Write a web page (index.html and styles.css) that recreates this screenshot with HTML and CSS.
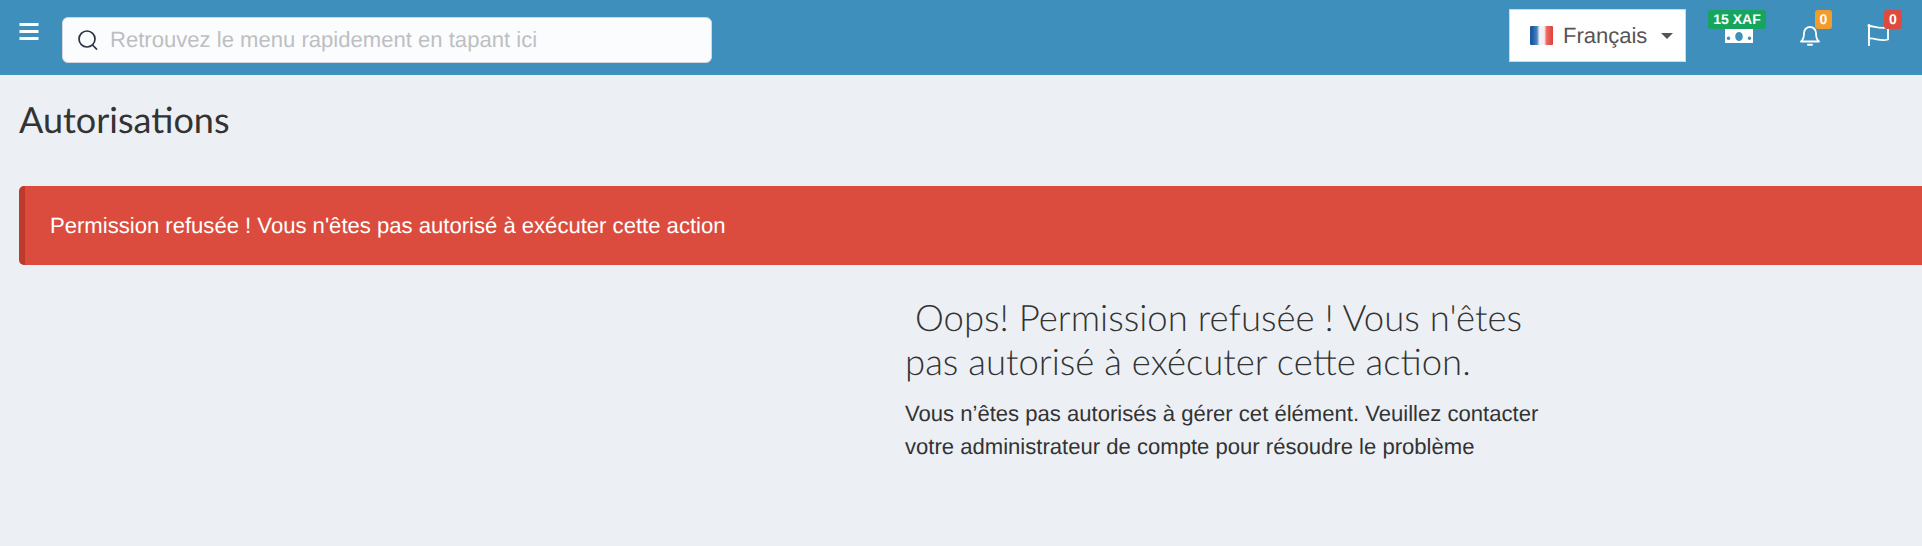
FILE: index.html
```html
<!DOCTYPE html>
<html lang="fr">
<head>
  <meta charset="UTF-8" />
  <title>Autorisations</title>
  <link rel="stylesheet" href="styles.css">
</head>
<body>

<div class="header">
  <button class="menu-toggle">
    <svg width="20" height="18" viewBox="0 0 20 18"><path d="M0.500 0h19v3h-19zM0.500 7h19v3h-19zM0.500 14h19v3h-19z" fill="#fff"/></svg>
  </button>
  <div class="search">
    <svg width="22" height="20" viewBox="0 0 22 20" fill="none" stroke="#2b3442" stroke-width="1.700"><circle cx="10" cy="9" r="8"/><path d="M15.500 15l4.500 4.500"/></svg>
    <span class="search-text">Retrouvez le menu rapidement en tapant ici</span>
  </div>
  <div class="header-right">
    <div class="lang">
      <svg class="flag" width="23" height="19" viewBox="0 0 23 19">
        <defs>
          <linearGradient id="fr">
            <stop offset="0.100" stop-color="#1d5aa5"/>
            <stop offset="0.300" stop-color="#4d80bd"/>
            <stop offset="0.420" stop-color="#f2f4f7"/>
            <stop offset="0.620" stop-color="#f6eeee"/>
            <stop offset="0.720" stop-color="#ee6a63"/>
            <stop offset="1" stop-color="#dd3f3a"/>
          </linearGradient>
        </defs>
        <rect width="23" height="19" rx="1" fill="url(#fr)"/>
      </svg>
      <span>Français</span>
      <span class="caret"></span>
    </div>
    <div class="nav-icon nav-money">
      <svg width="28" height="15" viewBox="0 0 28 15"><path fill-rule="evenodd" d="M0 0h28v15H0zM14 4a3.800 4.500 0 1 0 0 9 3.800 4.500 0 0 0 0-9zM3.500 8.500a1.800 1.800 0 1 0 0 3.600 1.800 1.800 0 0 0 0-3.600zM24.500 8.500a1.800 1.800 0 1 0 0 3.600 1.800 1.800 0 0 0 0-3.600z" fill="#fff"/></svg>
      <span class="badge badge-green">15 XAF</span>
    </div>
    <div class="nav-icon nav-bell">
      <svg width="20" height="22" viewBox="0 0 20 22" fill="none" stroke="#fff" stroke-width="1.800"><path d="M1 17.500c2-1.500 3-4 3-8.500a6 6 0 0 1 12 0c0 4.500 1 7 3 8.500z" stroke-linejoin="round"/><path d="M8 20.800h4" stroke-width="2" stroke-linecap="round"/></svg>
      <span class="badge badge-orange">0</span>
    </div>
    <div class="nav-icon nav-flag">
      <svg width="22" height="22" viewBox="0 0 22 22" fill="none" stroke="#fff" stroke-width="1.800"><path d="M2 1.500v20" stroke-linecap="round"/><circle cx="2" cy="1.500" r="1.500" fill="#fff" stroke="none"/><path d="M2 2c6 0 8 3 19 1.500v12c-8 2-12-1.500-19-1z" stroke-linejoin="round"/></svg>
      <span class="badge badge-red">0</span>
    </div>
  </div>
</div>

<div class="content">
  <h1 class="page-title">Autorisations</h1>
  <div class="alert">Permission refusée ! Vous n'êtes pas autorisé à exécuter cette action</div>
  <div class="error-page">
    <h3>&nbsp;Oops! Permission refusée ! Vous n'êtes pas autorisé à exécuter cette action.</h3>
    <p>Vous n’êtes pas autorisés à gérer cet élément. Veuillez contacter votre administrateur de compte pour résoudre le problème</p>
  </div>
</div>

</body>
</html>
```

FILE: styles.css
```css
html, body {
  margin: 0;
  padding: 0;
  background-color: #ecf0f5;
  font-family: 'Liberation Sans', Arial, sans-serif;
  color: #333;
  overflow: hidden;
  text-rendering: geometricPrecision;
}

.header {
  height: 75px;
  background-color: #3f8fbc;
  display: flex;
  align-items: flex-start;
}

.menu-toggle {
  background: none;
  border: none;
  padding: 0;
  margin: 22px 0 0 19px;
  width: 20px;
  height: 20px;
  line-height: 0;
}

.search {
  width: 650px;
  height: 46px;
  margin: 17px 0 0 23px;
  box-sizing: border-box;
  background-color: #fbfcfe;
  border: 1px solid #d2d6de;
  border-radius: 6px;
  display: flex;
  align-items: center;
  padding-left: 14px;
  gap: 11px;
}

.search-text {
  font-size: 22.080px;
  color: #bdbfc2;
}

.header-right {
  margin-left: auto;
  display: flex;
  align-items: flex-start;
}

.lang {
  width: 177px;
  height: 53px;
  margin-top: 9px;
  box-sizing: border-box;
  background-color: #fff;
  border: 1px solid #d2d6de;
  display: flex;
  align-items: center;
  padding-left: 20px;
  font-size: 22px;
  color: #555;
}

.flag {
  margin-right: 10px;
}

.caret {
  width: 0;
  height: 0;
  margin-left: 14px;
  border-left: 6px solid transparent;
  border-right: 6px solid transparent;
  border-top: 6px solid #555;
}

.nav-icon {
  position: relative;
  height: 75px;
  box-sizing: border-box;
  display: flex;
  align-items: flex-start;
}

.nav-money {
  width: 28px;
  margin-left: 39px;
  padding-top: 28px;
}

.nav-bell {
  width: 20px;
  margin-left: 47px;
  padding-top: 24px;
}

.nav-flag {
  width: 22px;
  margin-left: 47px;
  margin-right: 33px;
  padding-top: 24px;
}

.badge {
  position: absolute;
  top: 10px;
  height: 19px;
  border-radius: 3px;
  color: #fff;
  font-size: 14px;
  font-weight: bold;
  line-height: 19px;
  text-align: center;
}

.badge-green {
  left: -17px;
  width: 58px;
  background-color: #16a55e;
}

.badge-orange {
  left: 15px;
  width: 17px;
  background-color: #f39c2c;
}

.badge-red {
  left: 17px;
  width: 18px;
  background-color: #dd4b3e;
}

.content {
  padding: 0 0 0 19px;
}

.page-title {
  margin: 0;
  padding-top: 22px;
  font-family: 'Lato', sans-serif;
  font-size: 36px;
  font-weight: 400;
  line-height: 44px;
  color: #333;
}

.alert {
  margin-top: 45px;
  height: 79px;
  box-sizing: border-box;
  background-color: #dc4c3e;
  border-left: 6px solid #bf3a2a;
  border-radius: 5px 0 0 5px;
  color: #fff;
  font-size: 22.080px;
  line-height: 79px;
  padding-left: 25px;
}

.error-page {
  width: 640px;
  margin: 30px 0 0 886px;
}

.error-page h3 {
  margin: 0;
  font-family: 'Lato', sans-serif;
  font-size: 36.500px;
  font-weight: 300;
  line-height: 44px;
  color: #333;
}

.error-page p {
  margin: 14px 0 0;
  font-size: 22.080px;
  line-height: 33px;
  color: #333;
}
```
